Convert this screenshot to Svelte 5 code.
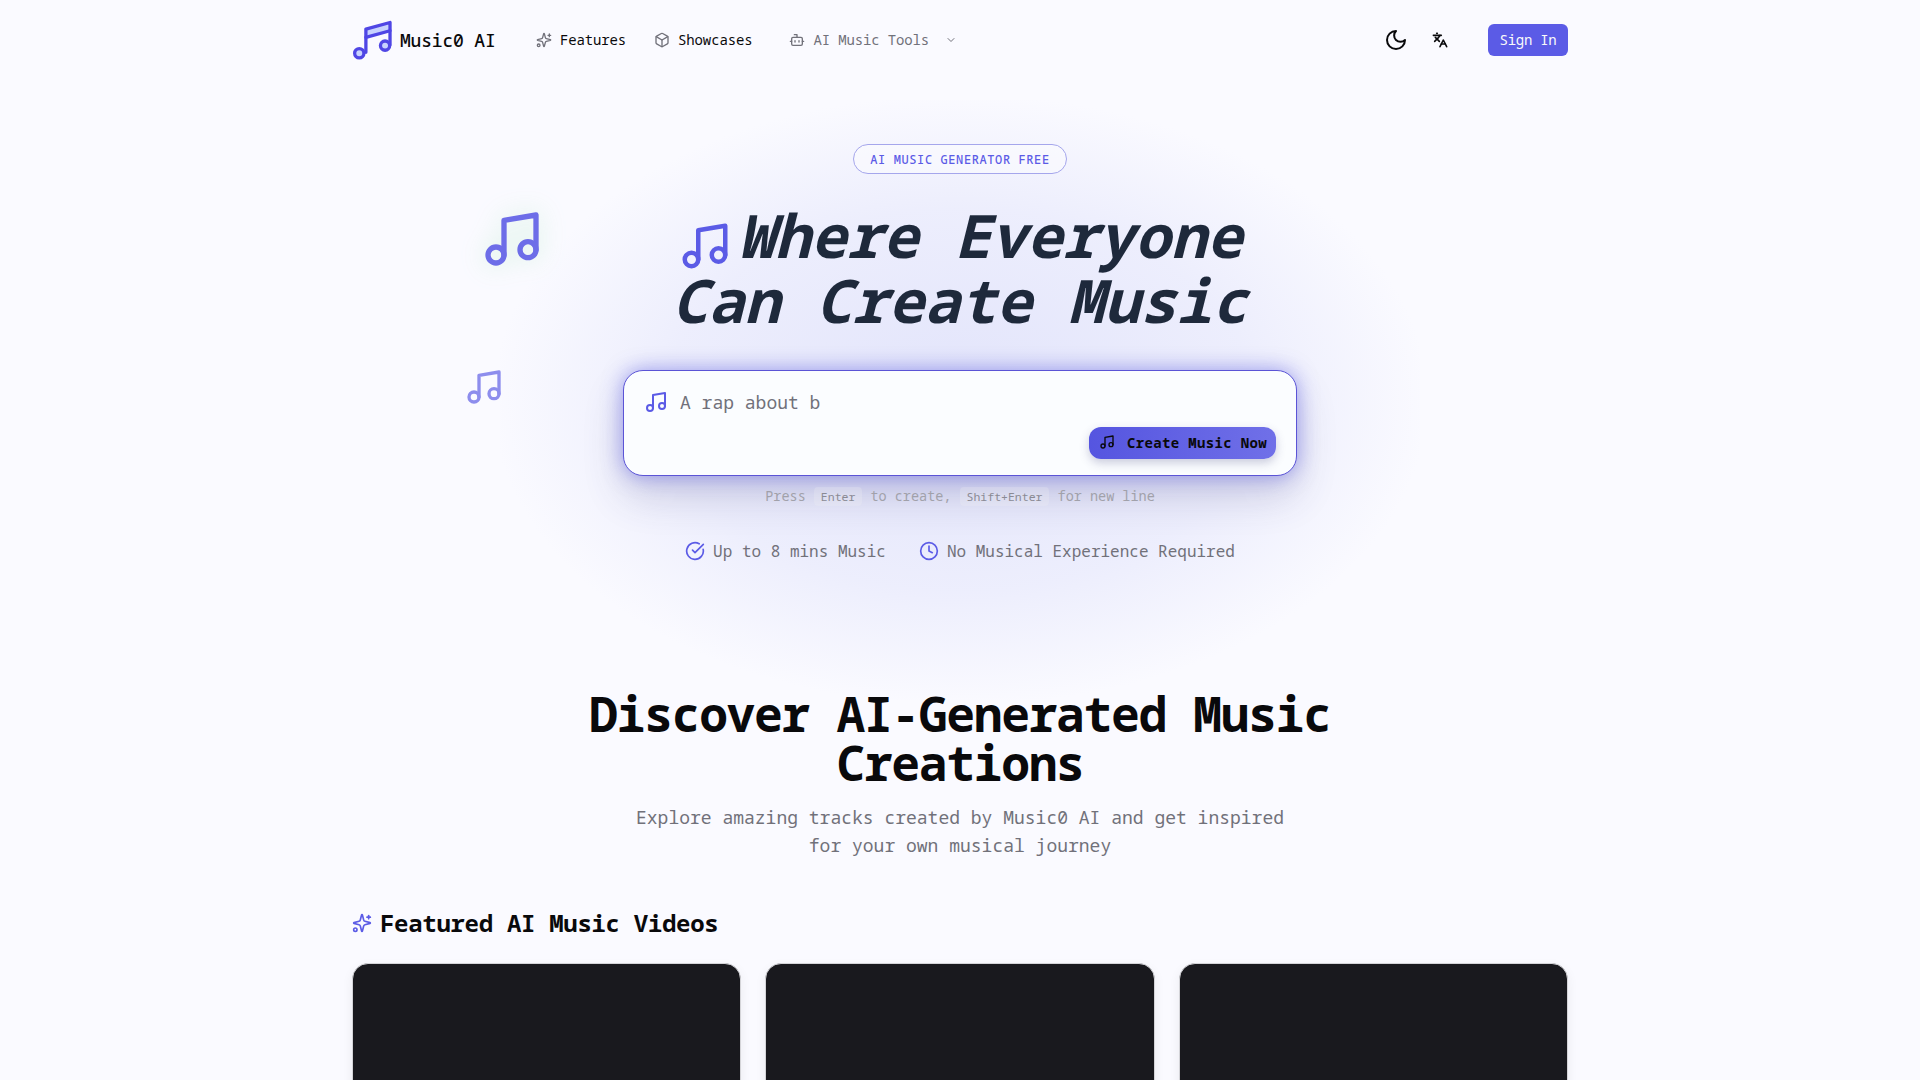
<script>
  const features = ['Up to 8 mins Music', 'No Musical Experience Required'];
  const cards = [1, 2, 3];
</script>

{#snippet music(size, cls)}
  <svg class={cls} width={size} height={size} viewBox="0 0 24 24" fill="none" stroke="currentColor" stroke-width="2" stroke-linecap="round" stroke-linejoin="round">
    <path d="M9 18V5l12-2v13" /><circle cx="6" cy="18" r="3" /><circle cx="18" cy="16" r="3" />
  </svg>
{/snippet}

{#snippet sparkles(size, cls)}
  <svg class={cls} width={size} height={size} viewBox="0 0 24 24" fill="none" stroke="currentColor" stroke-width="2" stroke-linecap="round" stroke-linejoin="round">
    <path d="M9.937 15.5A2 2 0 0 0 8.5 14.063l-6.135-1.582a.5.5 0 0 1 0-.962L8.5 9.936A2 2 0 0 0 9.937 8.5l1.582-6.135a.5.5 0 0 1 .963 0L14.063 8.5A2 2 0 0 0 15.5 9.937l6.135 1.581a.5.5 0 0 1 0 .964L15.5 14.063a2 2 0 0 0-1.437 1.437l-1.582 6.135a.5.5 0 0 1-.963 0z" />
    <path d="M20 3v4" /><path d="M22 5h-4" /><circle cx="4" cy="20" r="2" />
  </svg>
{/snippet}

<div class="page">
  <header class="header">
    <a class="logo" href="#top">
      <svg class="logo-icon" width="41" height="40" viewBox="18 28 124 120" fill="none" stroke="currentColor" stroke-width="10" stroke-linecap="round" stroke-linejoin="round">
        <path d="M60 55L133 35V60L60 80z" fill="#c7d2fe" stroke="none" />
        <path d="M60 125V55L133 35V102" /><path d="M60 80L133 60" />
        <circle cx="40" cy="128" r="14" fill="#c7d2fe" /><circle cx="118" cy="105" r="14" fill="#c7d2fe" />
      </svg>
      <span>Music0 AI</span>
    </a>
    <nav class="nav">
      <a href="#features" class="nav-link">{@render sparkles(16, 'nav-icon')}Features</a>
      <a href="#showcases" class="nav-link">
        <svg class="nav-icon" width="16" height="16" viewBox="0 0 24 24" fill="none" stroke="currentColor" stroke-width="2" stroke-linecap="round" stroke-linejoin="round">
          <path d="M21 8a2 2 0 0 0-1-1.73l-7-4a2 2 0 0 0-2 0l-7 4A2 2 0 0 0 3 8v8a2 2 0 0 0 1 1.73l7 4a2 2 0 0 0 2 0l7-4A2 2 0 0 0 21 16Z" /><path d="m3.3 7 8.7 5 8.7-5" /><path d="M12 22V12" />
        </svg>
        Showcases
      </a>
      <button class="nav-link tools">
        <svg width="16" height="16" viewBox="0 0 24 24" fill="none" stroke="currentColor" stroke-width="2" stroke-linecap="round" stroke-linejoin="round">
          <path d="M12 8V4H8" /><rect x="4" y="8" width="16" height="12" rx="2" /><path d="M2 14h2" /><path d="M20 14h2" /><path d="M15 13v2" /><path d="M9 13v2" />
        </svg>
        AI Music Tools
        <svg class="chevron" width="12" height="12" viewBox="0 0 24 24" fill="none" stroke="currentColor" stroke-width="2" stroke-linecap="round" stroke-linejoin="round"><path d="m6 9 6 6 6-6" /></svg>
      </button>
    </nav>
    <div class="actions">
      <button class="icon-btn moon" aria-label="Theme">
        <svg width="24" height="24" viewBox="0 0 24 24" fill="none" stroke="currentColor" stroke-width="2" stroke-linecap="round" stroke-linejoin="round"><path d="M12 3a6 6 0 0 0 9 9 9 9 0 1 1-9-9Z" /></svg>
      </button>
      <button class="icon-btn lang" aria-label="Language">
        <svg width="16" height="16" viewBox="0 0 24 24" fill="none" stroke="currentColor" stroke-width="2.4" stroke-linecap="round" stroke-linejoin="round">
          <path d="m5 8 6 6" /><path d="m4 14 6-6 2-3" /><path d="M2 5h12" /><path d="M7 2h1" /><path d="m22 22-5-10-5 10" /><path d="M14 18h6" />
        </svg>
      </button>
      <button class="sign-in">Sign In</button>
    </div>
  </header>

  <section class="hero">
    <div class="hero-glow"></div>
    <span class="floating one">{@render music(64, '')}</span>
    <span class="floating two">{@render music(40, '')}</span>
    <div class="badge">AI MUSIC GENERATOR FREE</div>
    <h1>{@render music(54, 'h1-icon')}Where Everyone<br />Can Create Music</h1>
    <div class="prompt">
      <div class="prompt-row">
        {@render music(24, 'prompt-icon')}
        <span class="placeholder">A rap about b</span>
      </div>
      <div class="prompt-foot">
        <button class="create">{@render music(16, '')}Create Music Now</button>
      </div>
    </div>
    <p class="hint">Press <kbd>Enter</kbd> to create, <kbd>Shift+Enter</kbd> for new line</p>
    <div class="features">
      <span class="feature">
        <svg width="20" height="20" viewBox="0 0 24 24" fill="none" stroke="currentColor" stroke-width="2" stroke-linecap="round" stroke-linejoin="round"><path d="M21.801 10A10 10 0 1 1 17 3.335" /><path d="m9 11 3 3L22 4" /></svg>
        <span>{features[0]}</span>
      </span>
      <span class="feature">
        <svg width="20" height="20" viewBox="0 0 24 24" fill="none" stroke="currentColor" stroke-width="2" stroke-linecap="round" stroke-linejoin="round"><circle cx="12" cy="12" r="10" /><path d="M12 6v6l4 2" /></svg>
        <span>{features[1]}</span>
      </span>
    </div>
  </section>

  <section class="discover">
    <h2>Discover AI-Generated Music Creations</h2>
    <p class="lead">Explore amazing tracks created by Music0 AI and get inspired for your own musical journey</p>
    <h3>{@render sparkles(20, 'h3-icon')}Featured AI Music Videos</h3>
    <div class="cards">
      {#each cards as card}
        <div class="card" data-card={card}></div>
      {/each}
    </div>
  </section>
</div>

<style>
  :global(html), :global(body) { height: 100%; overflow: hidden; }
  :global(body) { margin: 0; background: #fafaff; }
  .page { width: 1216px; margin: 0 auto; font-family: "Noto Sans Mono", "DejaVu Sans Mono", monospace; color: #09090b; position: relative; }
  a { color: inherit; text-decoration: none; }
  button { font-family: inherit; border: none; background: none; padding: 0; color: inherit; }

  .header { height: 80px; display: flex; align-items: center; }
  .logo { display: flex; align-items: center; gap: 7px; font-size: 18px; font-weight: 500; letter-spacing: -0.01em; width: 146px; }
  .logo-icon { color: #4f46e5; flex-shrink: 0; }
  .nav { display: flex; align-items: center; margin-left: 38px; padding-bottom: 1px; font-size: 14px; letter-spacing: -0.01em; }
  .nav-link { display: flex; align-items: center; gap: 8px; font-size: 14px; letter-spacing: -0.01em; }
  .nav-link svg { color: #71717a; }
  .nav-link:nth-child(2) { margin-left: 28px; }
  .tools { margin-left: 37px; color: #71717a; }
  .chevron { margin-left: 8px; }
  .actions { margin-left: auto; display: flex; align-items: center; }
  .icon-btn { display: flex; align-items: center; justify-content: center; }
  .lang { margin-left: 24px; }
  .sign-in { margin-left: 40px; width: 80px; height: 32px; padding-bottom: 2px; border-radius: 6px; background: #5b5be6; color: #fafafa; font-size: 14px; letter-spacing: -0.02em; }

  .hero { position: relative; height: 609px; display: flex; flex-direction: column; align-items: center; padding-top: 64px; box-sizing: border-box; }
  .hero-glow { position: absolute; left: 50%; top: 20px; width: 920px; height: 600px; transform: translateX(-50%); background: radial-gradient(ellipse at center, #e2e4fb 0%, rgba(226, 228, 251, 0.55) 45%, rgba(250, 250, 255, 0) 72%); pointer-events: none; }
  .badge { position: relative; height: 30px; box-sizing: border-box; padding: 0 16px; display: flex; align-items: center; border: 1px solid #a5a6ec; border-radius: 999px; font-size: 12px; font-weight: 500; letter-spacing: 0.05em; color: #5b5be6; background: rgba(255, 255, 255, 0.4); }
  h1 { position: relative; margin: 29px 0 0; font-size: 60px; line-height: 65px; font-weight: 700; font-style: italic; color: #1e293b; text-align: center; }
  .h1-icon { color: #5b5be6; vertical-align: -9px; margin-right: 7px; transform: translateY(6px); }
  .floating { position: absolute; color: #6d6de8; display: block; line-height: 0; }
  .floating.one { left: 128px; top: 127px; filter: drop-shadow(0 0 12px rgba(150, 230, 170, 0.4)); }
  .floating.two { left: 112px; top: 287px; color: #8d8ded; }

  .prompt { position: relative; width: 674px; height: 106px; margin-top: 37px; box-sizing: border-box; padding: 18px 20px 16px; border: 1px solid #5b54d6; border-radius: 20px; background: #fbfdff; box-shadow: 0 0 20px rgba(91, 91, 230, 0.55), 0 20px 40px rgba(60, 60, 120, 0.2); display: flex; flex-direction: column; justify-content: space-between; }
  .prompt-row { display: flex; align-items: center; gap: 12px; }
  .prompt-icon { color: #5b5be6; margin-top: 1px; }
  .placeholder { font-size: 18px; color: #71717a; }
  .prompt-foot { display: flex; justify-content: flex-end; }
  .create { display: flex; align-items: center; gap: 12px; height: 32px; width: 187px; box-sizing: border-box; padding: 0 0 2px 10px; border-radius: 12px; background: linear-gradient(90deg, #5555e0, #7070e8); color: #09090b; font-size: 14px; font-weight: 700; letter-spacing: 0.025em; box-shadow: 0 4px 10px rgba(60, 60, 120, 0.25); }

  .hint { position: relative; margin: 10px 0 0; font-size: 13.5px; color: #a1a1aa; line-height: 20px; }
  kbd { font-family: inherit; font-size: 11.5px; padding: 2px 7px; background: rgba(240, 240, 245, 0.25); border-radius: 4px; color: #8a8a94; }
  .features { position: relative; display: flex; gap: 33px; margin-top: 33px; font-size: 16px; color: #71717a; }
  .feature { display: flex; align-items: center; gap: 8px; }
  .feature svg { color: #5b5be6; }

  .discover { position: relative; text-align: center; }
  h2 { margin: 0 auto; width: 800px; font-size: 48px; line-height: 49px; font-weight: 700; letter-spacing: -0.028em; color: #09090b; }
  .lead { margin: 16px auto 0; width: 672px; font-size: 18px; line-height: 28px; color: #71717a; }
  h3 { margin: 48px 0 0; display: flex; align-items: center; gap: 8px; font-size: 24px; line-height: 32px; font-weight: 700; letter-spacing: -0.3px; color: #09090b; }
  .h3-icon { color: #5b5be6; }
  .cards { margin-top: 24px; display: grid; grid-template-columns: repeat(3, 1fr); gap: 24px; }
  .card { aspect-ratio: 16 / 9; background: #19191e; border-radius: 16px; border: 1px solid #d4d4d8; box-sizing: border-box; box-shadow: 0 4px 12px rgba(0, 0, 0, 0.06); }
</style>
